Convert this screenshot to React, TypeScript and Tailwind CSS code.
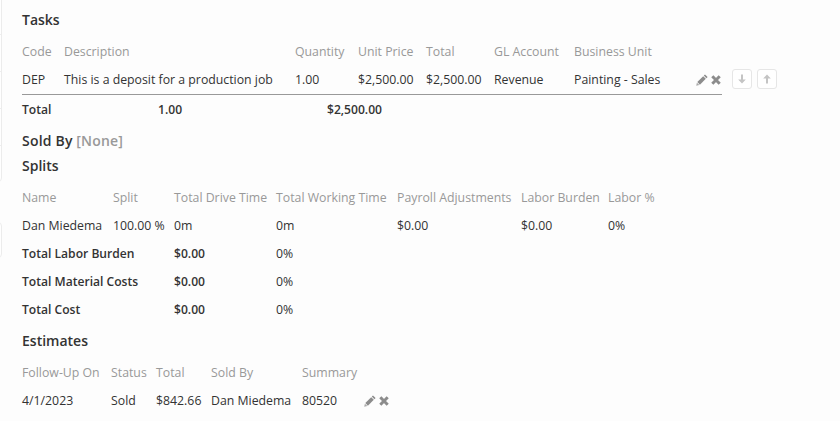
import React from "react";

const Pencil = ({ className }: { className?: string }) => (
  <svg viewBox="0 0 12 12" className={className} fill="currentColor">
    <path d="M9 0.4 11.6 3 10.4 4.2 7.8 1.6Z" />
    <path d="M7.2 2.2 9.8 4.8 3.9 10.7 1.3 8.1Z" />
    <path d="M0.9 8.7 3.3 11.1 0.2 11.8Z" opacity="0.75" />
  </svg>
);

const Cross = ({ className }: { className?: string }) => (
  <svg viewBox="0 0 10 10" className={className} fill="none" stroke="currentColor" strokeWidth="3">
    <path d="M1.3 1.3 8.7 8.7M8.7 1.3 1.3 8.7" />
  </svg>
);

const Arrow = ({ up }: { up?: boolean }) => (
  <button className="flex h-[20px] w-[20px] items-center justify-center rounded-[3px] border border-[#e6e6e6] bg-white text-[#c4c4c4]">
    <svg viewBox="0 0 10 10" className={`h-[10px] w-[10px] ${up ? "rotate-180" : ""}`} fill="currentColor">
      <path d="M4 0.5H6V5.5H8.8L5 9.5 1.2 5.5H4Z" />
    </svg>
  </button>
);

const Actions = () => (
  <div className="flex items-center gap-[3px] text-[#8c8c8c]">
    <Pencil className="h-[12px] w-[12px]" />
    <Cross className="h-[10px] w-[10px]" />
  </div>
);

const Row = ({ cols, cells, className }: { cols: string; cells: React.ReactNode[]; className: string }) => (
  <div className={`grid h-[28px] items-center whitespace-nowrap ${cols} ${className}`}>
    {cells.map((c, i) => (
      <div key={i}>{c}</div>
    ))}
  </div>
);

const head = "text-[#999999]";
const body = "text-[#333333]";
const bold = "text-[12.1px] font-semibold text-[#333333]";
const title = "text-[14px] font-semibold leading-[20px] text-[#333333]";

const taskCols = "grid-cols-[42px_231px_63px_68px_68px_80px_122px_26px]";
const splitCols = "grid-cols-[91px_61px_102px_121px_124px_87px_1fr]";
const estCols = "grid-cols-[89px_45px_55px_91px_62px_1fr]";

export default function App() {
  return (
    <div className="relative h-[421px] w-[840px] overflow-hidden bg-[#fdfdfd] pl-[22px] font-['Open_Sans',sans-serif] text-[12.3px] leading-[18px]">
      <div className="absolute left-[-6px] top-[-4px] flex h-[186px] w-[8px] flex-col rounded-[4px] border border-[#ececec] bg-white">
        <div className="mt-[37px] h-[37px] border-t border-[#eeeeee]" />
        <div className="h-[37px] border-t border-[#eeeeee]" />
        <div className="h-[37px] border-t border-[#eeeeee]" />
        <div className="border-t border-[#eeeeee]" />
      </div>
      <div className="absolute left-[-6px] top-[222px] h-[36px] w-[8px] rounded-[4px] border border-[#ececec] bg-white" />

      <h2 className={`pt-[10px] ${title}`}>Tasks</h2>
      <div className="mt-[8px] w-[700px]">
        <Row cols={taskCols} className={head} cells={["Code", "Description", "Quantity", "Unit Price", "Total", "GL Account", "Business Unit", ""]} />
        <div className="relative">
          <Row
            cols={taskCols}
            className={body}
            cells={["DEP", "This is a deposit for a production job", "1.00", "$2,500.00", "$2,500.00", "Revenue", "Painting - Sales", <Actions />]}
          />
          <div className="absolute left-[710px] top-[3px] flex gap-[5px]">
            <Arrow />
            <Arrow up />
          </div>
        </div>
        <div className="border-t border-[#999999]">
          <Row cols="grid-cols-[136px_169px_1fr]" className={`${bold} h-[30px]`} cells={["Total", "1.00", "$2,500.00"]} />
        </div>
      </div>

      <div className={`mt-[6px] ${title}`}>
        <span className="tracking-[0.2px]">Sold By</span> <span className="tracking-[0.2px] text-[#999999]">[None]</span>
      </div>
      <h2 className={`mt-[5px] ${title}`}>Splits</h2>
      <div className="mt-[8px]">
        <Row cols={splitCols} className={head} cells={["Name", "Split", "Total Drive Time", "Total Working Time", "Payroll Adjustments", "Labor Burden", "Labor %"]} />
        <Row cols={splitCols} className={body} cells={["Dan Miedema", "100.00 %", "0m", "0m", "$0.00", "$0.00", "0%"]} />
        {["Total Labor Burden", "Total Material Costs", "Total Cost"].map((t) => (
          <div key={t} className={`grid h-[28px] grid-cols-[152px_102px_1fr] items-center whitespace-nowrap ${bold}`}>
            <div>{t}</div>
            <div>$0.00</div>
            <div className="text-[12.3px] font-normal">0%</div>
          </div>
        ))}
      </div>

      <h2 className={`mt-[7px] ${title}`}>Estimates</h2>
      <div className="mt-[8px]">
        <Row cols={estCols} className={head} cells={["Follow-Up On", "Status", "Total", "Sold By", "Summary", ""]} />
        <Row cols={estCols} className={body} cells={["4/1/2023", "Sold", "$842.66", "Dan Miedema", "80520", <Actions />]} />
      </div>
    </div>
  );
}
